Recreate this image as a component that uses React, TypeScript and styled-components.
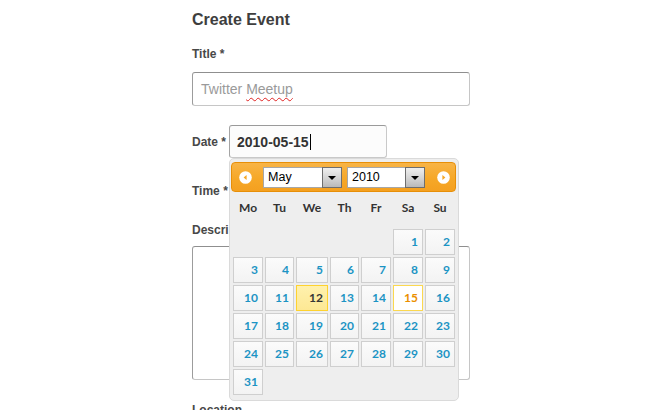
import React from "react";
import styled, { createGlobalStyle } from "styled-components";

const Global = createGlobalStyle`
  html, body { margin: 0; padding: 0; background: #ffffff; }
  body { font-family: "Liberation Sans", Arial, sans-serif; }
`;

const Page = styled.div`
  padding: 10px 0 0 192px;
  height: 400px;
  overflow: hidden;
`;

const Form = styled.div`
  width: 278px;
  display: flex;
  flex-direction: column;
`;

const Heading = styled.h2`
  margin: 0;
  font-size: 16px;
  line-height: 19px;
  font-weight: bold;
  color: #3e3e3e;
`;

const Label = styled.div<{ $mt: number }>`
  margin-top: ${(p) => p.$mt}px;
  font-size: 12px;
  line-height: 15px;
  font-weight: bold;
  color: #484848;
  white-space: nowrap;
`;

const TextBox = styled.div<{ $mt: number }>`
  margin-top: ${(p) => p.$mt}px;
  box-sizing: border-box;
  width: 278px;
  height: 34px;
  border: 1px solid #c6c6c6;
  border-top-color: #8f8f8f;
  border-left-color: #9c9c9c;
  border-radius: 3px;
  padding-left: 8px;
  display: flex;
  align-items: center;
  font-size: 14px;
  color: #9a9a9a;
  background: #fff;
`;

const Misspelled = styled.span`
  text-decoration: underline wavy #e02424;
  text-decoration-thickness: 1px;
  text-underline-offset: 3px;
`;

const DateRow = styled.div`
  margin-top: 19px;
  display: flex;
  align-items: flex-start;
  position: relative;
  z-index: 2;
`;

const DateLabel = styled(Label)`
  margin-right: 3px;
`;

const DateWrap = styled.div`
  position: relative;
`;

const DateInput = styled.div`
  box-sizing: border-box;
  width: 158px;
  height: 33px;
  border: 1px solid #c9c9c9;
  border-top-color: #9a9a9a;
  border-left-color: #a4a4a4;
  border-radius: 3px;
  padding-left: 7px;
  display: flex;
  align-items: center;
  font-size: 14px;
  font-weight: bold;
  color: #333;
  background: #fcfcfc;
`;

const Caret = styled.span`
  display: inline-block;
  width: 1px;
  height: 16px;
  margin-left: 1px;
  background: #000;
`;

const TextArea = styled.div`
  margin-top: 8px;
  box-sizing: border-box;
  width: 278px;
  height: 134px;
  border: 1px solid #c6c6c6;
  border-top-color: #8f8f8f;
  border-left-color: #9c9c9c;
  border-radius: 3px;
  background: #fff;
`;

/* ---------- datepicker ---------- */

const Popup = styled.div`
  position: absolute;
  top: 100%;
  left: 0;
  box-sizing: border-box;
  width: 230px;
  padding: 3px 2px 5px 1px;
  background: #eeeeee;
  border: 1px solid #dadada;
  border-radius: 5px;
  font-family: Lato, "Open Sans", sans-serif;
`;

const Header = styled.div`
  box-sizing: border-box;
  width: 225px;
  height: 30px;
  border: 1px solid #e78f08;
  border-radius: 4px;
  background: linear-gradient(#f8b446, #f6a828 55%, #f4a020);
  display: flex;
  align-items: center;
  padding-left: 7px;
`;

const NavIcon = styled.svg<{ $ml: number }>`
  display: block;
  width: 13px;
  height: 13px;
  margin-left: ${(p) => p.$ml}px;
  flex: none;
`;

const Select = styled.div<{ $w: number; $ml: number }>`
  position: relative;
  box-sizing: border-box;
  width: ${(p) => p.$w}px;
  height: 21px;
  margin-left: ${(p) => p.$ml}px;
  background: #fff;
  border: 1px solid #a7a7a7;
  font-family: "Liberation Sans", Arial, sans-serif;
  font-size: 12.5px;
  line-height: 19px;
  padding-left: 4px;
  color: #000;
`;

const SelectButton = styled.div`
  position: absolute;
  top: -1px;
  right: -1px;
  box-sizing: border-box;
  width: 20px;
  height: 21px;
  border: 1px solid #6e6e6e;
  background: linear-gradient(#efefef, #d6d6d6 50%, #b9b9b9);
  display: flex;
  align-items: center;
  justify-content: center;
`;

const Arrow = styled.span`
  width: 0;
  height: 0;
  border-left: 4px solid transparent;
  border-right: 4px solid transparent;
  border-top: 4px solid #000;
  margin-top: 1px;
`;

const cols = "30px 29px 32px 29px 30px 30px 30px";

const WeekRow = styled.div`
  display: grid;
  grid-template-columns: ${cols};
  column-gap: 2px;
  margin: 7px 0 0 2px;
  height: 18px;
`;

const WeekDay = styled.div`
  text-align: center;
  font-size: 12px;
  font-weight: bold;
  line-height: 18px;
  color: #333;
`;

const DayGrid = styled.div`
  display: grid;
  grid-template-columns: ${cols};
  grid-auto-rows: 26px;
  gap: 2px;
  margin: 12px 0 0 2px;
`;

type DayKind = "default" | "today" | "active";

const Day = styled.div<{ $kind: DayKind; $col?: number }>`
  box-sizing: border-box;
  grid-column: ${(p) => (p.$col ? `${p.$col}` : "auto")};
  border: 1px solid
    ${(p) => (p.$kind === "today" ? "#fed22f" : p.$kind === "active" ? "#fbd850" : "#cfcfcf")};
  background: ${(p) =>
    p.$kind === "today"
      ? "linear-gradient(#fff1ad, #fde894)"
      : p.$kind === "active"
      ? "#ffffff"
      : "linear-gradient(#fbfbfb, #f3f3f3)"};
  color: ${(p) => (p.$kind === "today" ? "#363636" : p.$kind === "active" ? "#eb8f00" : "#1c94c4")};
  font-size: 12px;
  font-weight: bold;
  line-height: 24px;
  text-align: right;
  padding-right: 4px;
`;

const PrevIcon = ({ ml }: { ml: number }) => (
  <NavIcon $ml={ml} viewBox="0 0 13 13">
    <circle cx="6.5" cy="6.5" r="6.3" fill="#fff" />
    <polygon points="7.6,3.9 4.6,6.5 7.6,9.1" fill="#f6a828" />
  </NavIcon>
);

const NextIcon = ({ ml }: { ml: number }) => (
  <NavIcon $ml={ml} viewBox="0 0 13 13">
    <circle cx="6.5" cy="6.5" r="6.3" fill="#fff" />
    <polygon points="5.4,3.9 8.4,6.5 5.4,9.1" fill="#f6a828" />
  </NavIcon>
);

const weekDays = ["Mo", "Tu", "We", "Th", "Fr", "Sa", "Su"];
const days = Array.from({ length: 31 }, (_, i) => i + 1);

const Datepicker = () => (
  <Popup>
    <Header>
      <PrevIcon ml={0} />
      <Select $w={79} $ml={11}>
        May
        <SelectButton>
          <Arrow />
        </SelectButton>
      </Select>
      <Select $w={78} $ml={5}>
        2010
        <SelectButton>
          <Arrow />
        </SelectButton>
      </Select>
      <NextIcon ml={12} />
    </Header>
    <WeekRow>
      {weekDays.map((d) => (
        <WeekDay key={d}>{d}</WeekDay>
      ))}
    </WeekRow>
    <DayGrid>
      {days.map((d) => (
        <Day
          key={d}
          $col={d === 1 ? 6 : undefined}
          $kind={d === 12 ? "today" : d === 15 ? "active" : "default"}
        >
          {d}
        </Day>
      ))}
    </DayGrid>
  </Popup>
);

export default function App() {
  return (
    <>
      <Global />
      <Page>
        <Form>
          <Heading>Create Event</Heading>
          <Label $mt={18}>Title *</Label>
          <TextBox $mt={10}>
            Twitter&nbsp;<Misspelled>Meetup</Misspelled>
          </TextBox>
          <DateRow>
            <DateLabel $mt={10}>Date *</DateLabel>
            <DateWrap>
              <DateInput>
                2010-05-15
                <Caret />
              </DateInput>
              <Datepicker />
            </DateWrap>
          </DateRow>
          <Label $mt={26}>Time *</Label>
          <Label $mt={24}>Description</Label>
          <TextArea />
          <Label $mt={23}>Location</Label>
        </Form>
      </Page>
    </>
  );
}
